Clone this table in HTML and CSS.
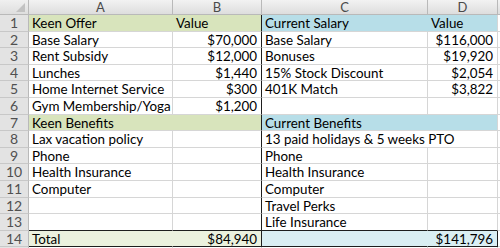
FILE: index.html
```html
<!DOCTYPE html>
<html>
<head>
<meta charset="utf-8">
<link rel="stylesheet" href="styles.css">
</head>
<body>
<div class="sheet">
  <div class="corner"><span class="tri"></span></div>
  <div class="colh">A</div><div class="colh">B</div><div class="colh">C</div><div class="colh">D</div><div class="colh end"></div>

  <div class="rn">1</div>
  <div class="c g nob">Keen Offer</div><div class="c g div">Value</div>
  <div class="c b nob">Current Salary</div><div class="c b">Value</div><div class="c x"></div>

  <div class="rn">2</div>
  <div class="c">Base Salary</div><div class="c r div">$70,000</div>
  <div class="c">Base Salary</div><div class="c r">$116,000</div><div class="c x"></div>

  <div class="rn">3</div>
  <div class="c">Rent Subsidy</div><div class="c r div">$12,000</div>
  <div class="c">Bonuses</div><div class="c r">$19,920</div><div class="c x"></div>

  <div class="rn">4</div>
  <div class="c">Lunches</div><div class="c r div">$1,440</div>
  <div class="c">15% Stock Discount</div><div class="c r">$2,054</div><div class="c x"></div>

  <div class="rn">5</div>
  <div class="c">Home Internet Service</div><div class="c r div">$300</div>
  <div class="c">401K Match</div><div class="c r">$3,822</div><div class="c x"></div>

  <div class="rn">6</div>
  <div class="c">Gym Membership/Yoga</div><div class="c r div">$1,200</div>
  <div class="c"></div><div class="c"></div><div class="c x"></div>

  <div class="rn">7</div>
  <div class="c g div span2">Keen Benefits</div>
  <div class="c b span2">Current Benefits</div><div class="c x"></div>

  <div class="rn">8</div>
  <div class="c">Lax vacation policy</div><div class="c div"></div>
  <div class="c span2">13 paid holidays &amp; 5 weeks PTO</div><div class="c x"></div>

  <div class="rn">9</div>
  <div class="c">Phone</div><div class="c div"></div>
  <div class="c">Phone</div><div class="c"></div><div class="c x"></div>

  <div class="rn">10</div>
  <div class="c">Health Insurance</div><div class="c div"></div>
  <div class="c">Health Insurance</div><div class="c"></div><div class="c x"></div>

  <div class="rn">11</div>
  <div class="c">Computer</div><div class="c div"></div>
  <div class="c">Computer</div><div class="c"></div><div class="c x"></div>

  <div class="rn">12</div>
  <div class="c"></div><div class="c div"></div>
  <div class="c">Travel Perks</div><div class="c"></div><div class="c x"></div>

  <div class="rn">13</div>
  <div class="c pre"></div><div class="c div pre"></div>
  <div class="c pre">Life Insurance</div><div class="c pre"></div><div class="c x"></div>

  <div class="rn">14</div>
  <div class="c tg nob tot">Total</div><div class="c tg r div tot">$84,940</div>
  <div class="c tb nob tot"></div><div class="c tb r tot last">$141,796</div><div class="c x"></div>

  <div class="rn"></div>
  <div class="c"></div><div class="c"></div><div class="c"></div><div class="c"></div><div class="c x"></div>
</div>
</body>
</html>
```
FILE: styles.css
```css
html, body {
  margin: 0;
  padding: 0;
  background: #ffffff;
}

.sheet {
  display: grid;
  grid-template-columns: 29px 144px 89px 166px 70px 2px;
  grid-template-rows: 15px repeat(14, 16.6px) 20px;
  width: 500px;
  height: 248px;
  overflow: hidden;
  font-family: "Lato", "Liberation Sans", sans-serif;
  font-size: 13.4px;
  color: #000;
}

.corner {
  position: relative;
  background: linear-gradient(#f0f0f0, #dedede);
  border-right: 1px solid #b9b9b9;
  border-bottom: 1px solid #b9b9b9;
  box-sizing: border-box;
}

.tri {
  position: absolute;
  right: 3px;
  bottom: 2px;
  width: 0;
  height: 0;
  border-left: 9px solid transparent;
  border-bottom: 9px solid #c2c2c2;
}

.colh {
  background: linear-gradient(#f2f2f2, #dddddd);
  border-right: 1px solid #b9b9b9;
  border-bottom: 1px solid #b9b9b9;
  box-sizing: border-box;
  text-align: center;
  line-height: 14px;
  color: #4a4a4a;
  font-size: 13px;
}

.colh.end {
  border-right: none;
}

.rn {
  background: #e3e3e3;
  border-right: 1px solid #b9b9b9;
  border-bottom: 1px solid #c8c8c8;
  box-sizing: border-box;
  text-align: center;
  color: #505050;
  font-size: 14px;
  line-height: 16px;
}

.c {
  border-right: 1px solid #d6d6d6;
  border-bottom: 1px solid #d6d6d6;
  box-sizing: border-box;
  padding: 0 4px 0 3px;
  line-height: 16px;
  white-space: nowrap;
  overflow: visible;
}

.c.x {
  border-right: none;
}

.r {
  text-align: right;
}

.span2 {
  grid-column: span 2;
}

.g {
  background: #d8e4bc;
}

.b {
  background: #b7dee8;
}

.g.nob {
  border-right-color: #d8e4bc;
}

.b.nob {
  border-right-color: #b7dee8;
}

.div {
  border-right: 1px solid #1e1e1e;
}

.pre {
  border-bottom: 1px solid #1e1e1e;
}

.tot {
  border-bottom: 1px solid #1e1e1e;
}

.tg {
  background: #ebf1de;
}

.tb {
  background: #daeef3;
}

.tg.nob {
  border-right-color: #ebf1de;
}

.tb.nob {
  border-right-color: #daeef3;
}

.tot.last {
  border-right: 1px solid #1e1e1e;
}
```
